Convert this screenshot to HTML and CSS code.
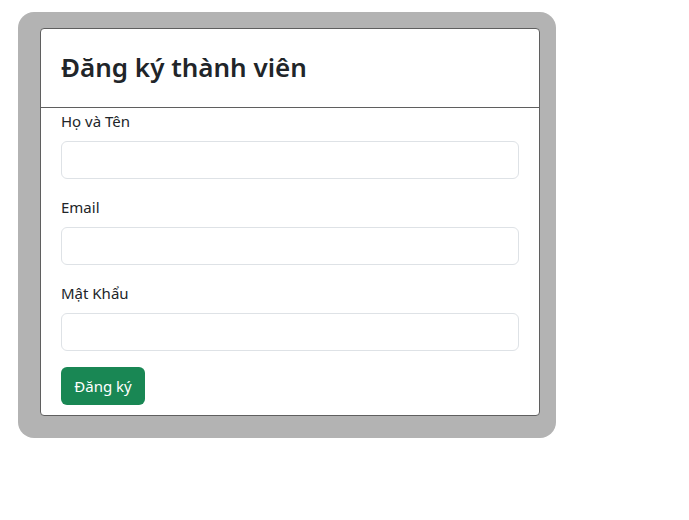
FILE: index.html
```html
<!DOCTYPE html>
<html lang="vi">
<head>
<meta charset="utf-8">
<title>Đăng ký thành viên</title>
<link rel="stylesheet" href="styles.css">
</head>
<body>
<div class="frame">
  <div class="card">
    <div class="card-header">
      <h3 class="title">Đăng ký thành viên</h3>
    </div>
    <form class="card-body">
      <div class="field">
        <label class="label" for="name">Họ và Tên</label>
        <input class="input" id="name" type="text">
      </div>
      <div class="field">
        <label class="label" for="email">Email</label>
        <input class="input" id="email" type="email">
      </div>
      <div class="field">
        <label class="label" for="pw">Mật Khẩu</label>
        <input class="input" id="pw" type="password">
      </div>
      <button class="btn" type="button">Đăng ký</button>
    </form>
  </div>
</div>
</body>
</html>
```
FILE: styles.css
```css
* { box-sizing: border-box; }
html, body { margin: 0; padding: 0; background: #fff; }
body {
  font-family: "Noto Sans", "Open Sans", sans-serif;
  font-size: 16px;
  line-height: 24px;
  color: #212529;
  padding: 12px 0 0 18px;
}
.frame {
  width: 538px;
  background: #b3b3b3;
  border-radius: 16px;
  padding: 16px 16px 22px 22px;
}
.card {
  background: #fff;
  border: 1px solid #5f5f5f;
  border-radius: 4px;
}
.card-header {
  border-bottom: 1px solid #5f5f5f;
  padding: 20px 20px 0 20px;
  height: 79px;
}
.title {
  margin: 0;
  font-size: 26px;
  line-height: 36px;
  font-weight: 600;
}
.card-body {
  padding: 1px 20px 10px 20px;
  display: flex;
  flex-direction: column;
  align-items: flex-start;
}
.field {
  width: 100%;
  margin-bottom: 16px;
  display: flex;
  flex-direction: column;
}
.label {
  margin-bottom: 8px;
  font-size: 15px;
  line-height: 24px;
}
.input {
  height: 38px;
  width: 100%;
  border: 1px solid #dee2e6;
  border-radius: 6px;
  font: inherit;
  padding: 6px 12px;
}
.btn {
  height: 38px;
  width: 84px;
  border: none;
  background: #198754;
  color: #fff;
  border-radius: 6px;
  font-family: inherit;
  font-size: 15px;
  padding: 0;
}
```
